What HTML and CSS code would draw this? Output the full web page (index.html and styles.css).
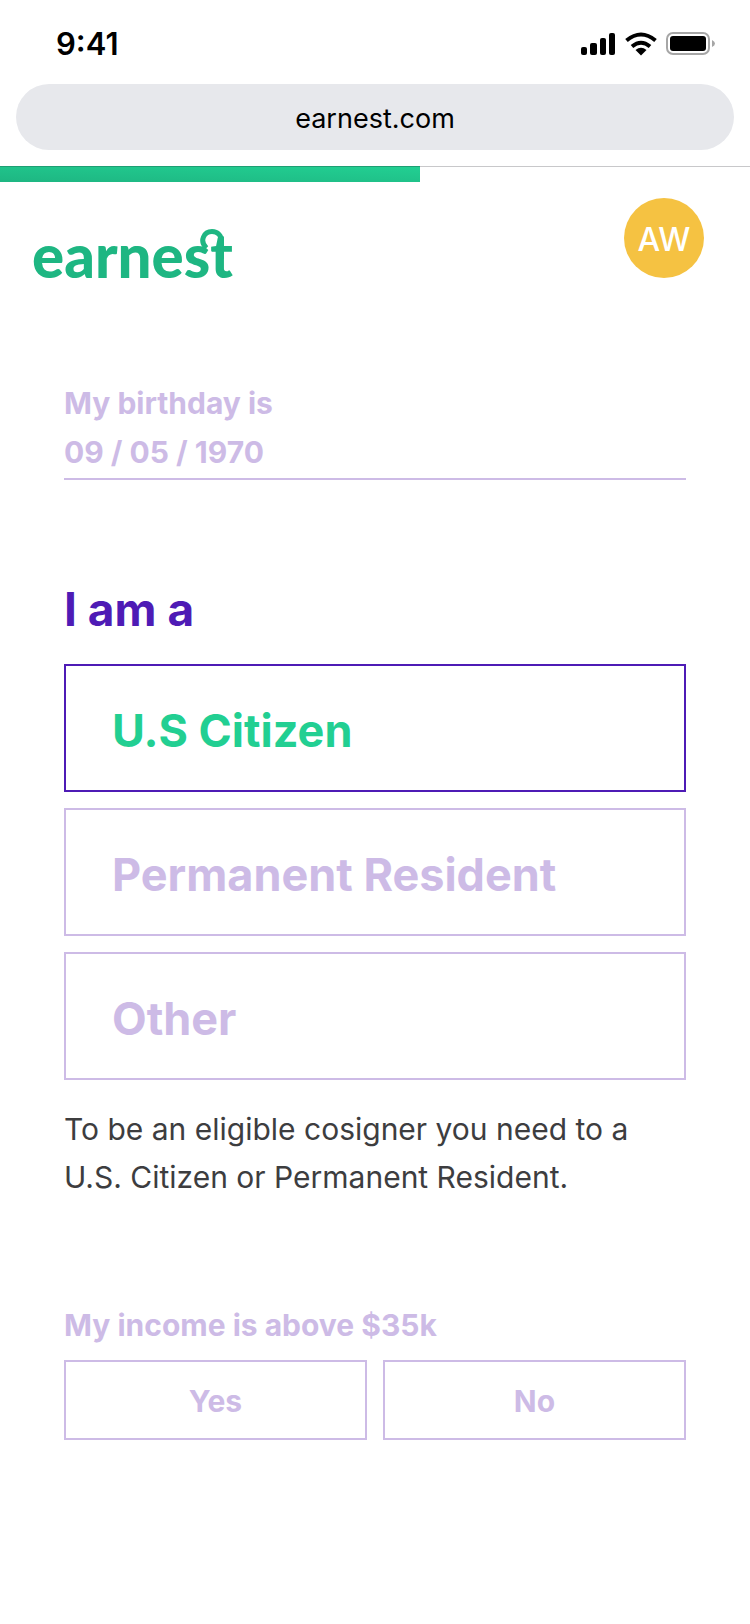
FILE: index.html
```html
<!DOCTYPE html>
<html lang="en">
<head>
<meta charset="utf-8">
<meta name="viewport" content="width=device-width, initial-scale=1">
<title>Earnest</title>
<link rel="stylesheet" href="styles.css">
</head>
<body>
<header class="browser">
  <div class="status">
    <span class="time">9:41</span>
    <svg class="status-icons" width="136" height="24" viewBox="0 0 136 24" aria-hidden="true">
      <rect x="0" y="15" width="6" height="8" rx="2"/>
      <rect x="9" y="11" width="7" height="12" rx="2"/>
      <rect x="19" y="6" width="6" height="17" rx="2"/>
      <rect x="28" y="1" width="6" height="22" rx="2"/>
      <g fill="none" stroke="#000" stroke-width="4">
        <path d="M45.500 8.500 Q60 -3.500 74.500 8.500"/>
        <path d="M51 14.500 Q60 7 69 14.500"/>
      </g>
      <path d="M54.500 18 Q60 13.500 65.500 18 L60 23.500 Z"/>
      <rect x="86" y="1" width="42" height="21" rx="6" fill="none" stroke="#a6a6a6" stroke-width="2"/>
      <rect x="89" y="4" width="36" height="15" rx="3"/>
      <path d="M131 8 Q134 9.500 134 11.500 T131 15 Z" fill="#a6a6a6"/>
    </svg>
  </div>
  <div class="address">earnest.com</div>
</header>
<div class="progress"><div class="progress-fill"></div></div>
<div class="topbar">
  <a class="logo" href="#" aria-label="earnest">
    <span class="logo-text">earnest</span>
    <svg class="logo-arch" width="34" height="34" viewBox="0 0 34 34" aria-hidden="true">
      <path d="M7.500 19 C0 12 5 2.500 13 2.500 C19 2.500 22.500 7 22.500 12 V30" fill="none" stroke="#1eb682" stroke-width="5"/>
    </svg>
  </a>
  <button class="avatar" type="button">AW</button>
</div>
<main class="form">
  <div class="field">
    <label class="label" for="birthday">My birthday is</label>
    <input class="text-input" id="birthday" type="text" value="09 / 05 / 1970">
  </div>
  <fieldset class="status-group">
    <legend class="question">I am a</legend>
    <div class="options">
      <label class="option selected"><input type="radio" name="citizenship" checked>U.S Citizen</label>
      <label class="option"><input type="radio" name="citizenship">Permanent Resident</label>
      <label class="option"><input type="radio" name="citizenship">Other</label>
    </div>
    <p class="note">To be an eligible cosigner you need to a U.S. Citizen or Permanent Resident.</p>
  </fieldset>
  <section class="income" aria-labelledby="income-label">
    <h2 class="label" id="income-label">My income is above $35k</h2>
    <div class="answers">
      <button class="answer" type="button">Yes</button>
      <button class="answer" type="button">No</button>
    </div>
  </section>
</main>
</body>
</html>
```
FILE: styles.css
```css
* { box-sizing: border-box; margin: 0; padding: 0; }
body { background: #fff; color: #3d3d3f; font-family: Inter, "Liberation Sans", sans-serif; }
button, input { font: inherit; color: inherit; }
.browser { padding: 24px 16px 16px; }
.status { display: flex; justify-content: space-between; align-items: center; height: 40px; padding: 0 17px 0 40px; margin-bottom: 20px; color: #000; }
.time { font-size: 31px; font-weight: 600; line-height: 40px; }
.address { height: 66px; line-height: 70px; border-radius: 33px; background: #e7e8ec; color: #000; text-align: center; font-size: 27px; }
.progress { height: 16px; border-top: 1px solid #c8c8ca; }
.progress-fill { width: 56%; height: 16px; margin-top: -1px; border-top: 1px solid #1e9e73; background: linear-gradient(2deg, #1eb682, #22cf92); }
.topbar { display: flex; justify-content: space-between; align-items: flex-start; padding: 16px 46px 0 32px; }
.logo { position: relative; display: block; margin-top: 24px; color: #1eb682; text-decoration: none; font-family: Lato, sans-serif; font-size: 60px; font-weight: 900; line-height: 66px; }
.logo-arch { position: absolute; right: 0; top: 7px; }
.avatar { width: 80px; height: 80px; border: 0; border-radius: 50%; background: #f5c242; color: #fff; font-size: 32px; font-weight: 500; line-height: 84px; }
.form { padding: 90px 64px 184px; }
.field, .income { color: #cdbbe6; font-weight: 700; }
.label { display: block; padding-top: 1px; font-size: 30px; font-weight: 700; line-height: 48px; }
.text-input { display: block; width: 100%; height: 53px; padding-bottom: 2px; border: 0; border-bottom: 2px solid #cdbbe6; background: none; font-size: 30px; }
.status-group { border: 0; margin-top: 96px; }
.question { color: #4e1bb5; padding-top: 1px; font-size: 46px; font-weight: 700; line-height: 64px; margin-bottom: 23px; }
.options { display: grid; gap: 16px; }
.option { display: flex; align-items: center; height: 128px; padding: 4px 46px 0; border: 2px solid #cdbbe6; color: #cdbbe6; font-size: 45px; font-weight: 700; }
.option input { appearance: none; width: 0; height: 0; }
.selected { border-color: #4e1bb5; color: #22cf92; }
.note { margin-top: 25px; font-size: 30px; line-height: 48px; }
.income { margin-top: 99px; }
.answers { display: grid; grid-template-columns: 1fr 1fr; gap: 16px; margin-top: 11px; }
.answer { height: 80px; padding-top: 2px; border: 2px solid #cdbbe6; background: none; font-size: 30px; }
```
